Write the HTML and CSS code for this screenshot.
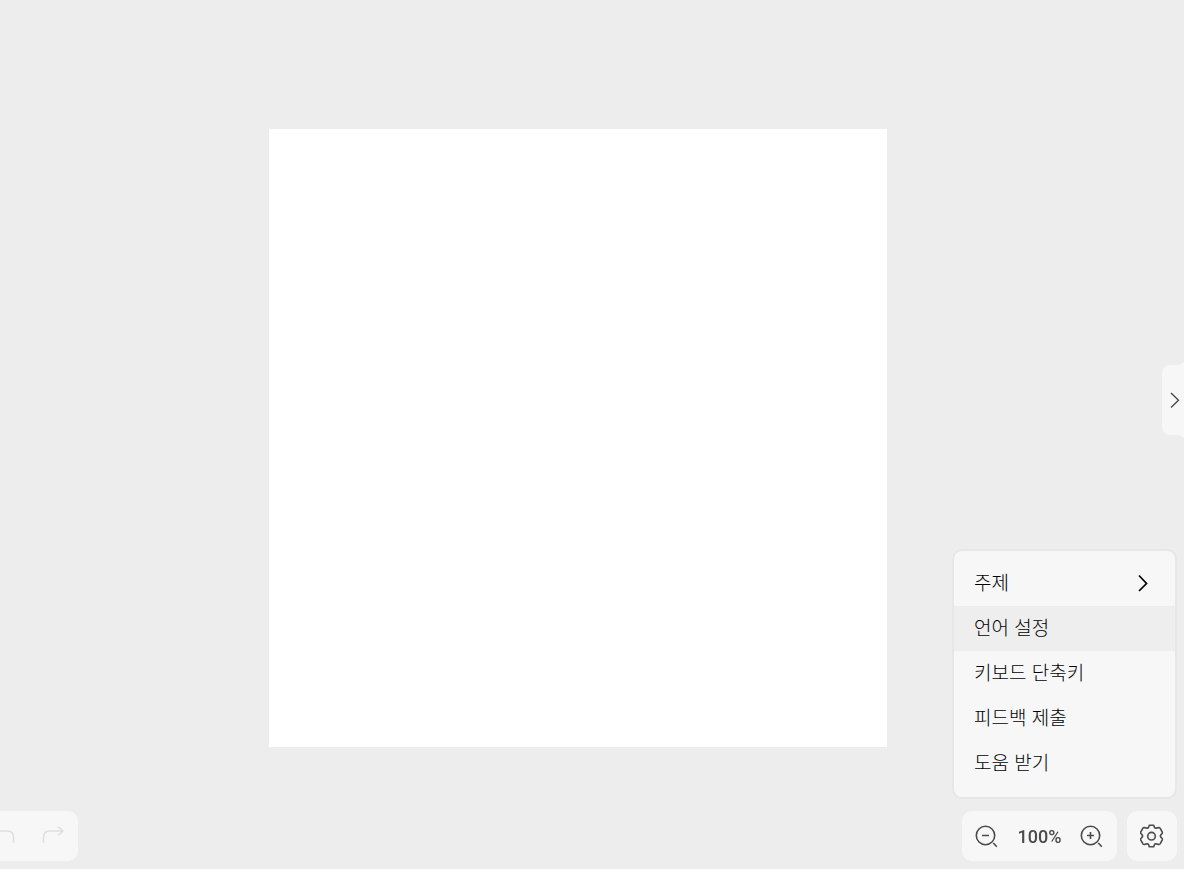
FILE: index.html
```html
<!DOCTYPE html>
<html lang="ko">
<head>
<meta charset="UTF-8" />
<meta name="viewport" content="width=device-width, initial-scale=1" />
<title>Canvas</title>
<link rel="stylesheet" href="styles.css">
</head>
<body>

<main class="workspace">
  <canvas class="artboard" id="artboard" width="618" height="618"></canvas>
</main>

<button class="side-tab" type="button" aria-label="패널 열기">
  <svg width="22" height="76" viewBox="0 0 22 76" fill="none">
    <path d="M22 0C20 2 17 3 13 3H9Q0 3 0 12V64Q0 73 9 73H13C17 73 20 74 22 76Z" fill="#f7f7f7" />
    <path d="M9 31L16.500 38.300L9 45.500" stroke="#4b4b4b" stroke-width="1.400" />
  </svg>
</button>

<div class="bottom">
  <div class="bar">
    <button class="tool" type="button" aria-label="실행 취소" disabled>
      <svg width="24" height="24" viewBox="0 0 24 24">
        <path d="M22.500 18.500V13.500Q22.500 7 16 7H2M7 2.500L2 7L7 11.500" />
      </svg>
    </button>
    <button class="tool" type="button" aria-label="다시 실행" disabled>
      <svg width="24" height="24" viewBox="0 0 24 24">
        <path d="M2.500 18.500V13.500Q2.500 7 8.500 7H22M17 2.500L22 7L17 11.500" />
      </svg>
    </button>
  </div>

  <div class="right">
    <nav class="menu" id="settingsMenu">
      <button class="menu-item" type="button">주제
        <svg width="12" height="18" viewBox="0 0 12 18"><path d="M2 1.500L9.500 9.500L2 17" /></svg>
      </button>
      <button class="menu-item active" type="button">언어 설정</button>
      <button class="menu-item" type="button">키보드 단축키</button>
      <button class="menu-item" type="button">피드백 제출</button>
      <button class="menu-item" type="button">도움 받기</button>
    </nav>

    <div class="bar">
      <button class="tool" type="button" id="zoomOut" aria-label="축소">
        <svg width="24" height="24" viewBox="0 0 24 24">
          <circle cx="10.500" cy="11.500" r="9.200" /><path d="M7 11.500H14M18.300 19L21.800 22.700" />
        </svg>
      </button>
      <button class="zoom-value" type="button" id="zoomValue">100%</button>
      <button class="tool" type="button" id="zoomIn" aria-label="확대">
        <svg width="24" height="24" viewBox="0 0 24 24">
          <circle cx="10.500" cy="11.500" r="9.200" /><path d="M7 11.500H14M10.500 8V15M18.300 19L21.800 22.700" />
        </svg>
      </button>
    </div>

    <div class="bar">
      <button class="tool" type="button" id="settings" aria-label="설정">
        <svg width="24" height="24" viewBox="0 0 24 24">
          <path d="M9.300 1.200H13.700L14.500 3.400Q15 4.500 16.300 4.100L18.700 3.500Q19.600 3.400 20.200 4.400L22.300 8.200Q22.600 9 21.900 9.700L20.800 10.900Q20 12 20.800 13.100L21.900 14.300Q22.600 15 22.300 15.800L20.200 19.600Q19.600 20.600 18.700 20.500L16.300 19.900Q15 19.500 14.500 20.600L13.700 22.800H9.300L8.500 20.600Q8 19.500 6.700 19.900L4.300 20.500Q3.400 20.600 2.800 19.600L.7 15.800Q.4 15 1.100 14.300L2.200 13.100Q3 12 2.200 10.900L1.100 9.700Q.4 9 .7 8.200L2.800 4.400Q3.400 3.400 4.300 3.500L6.700 4.100Q8 4.500 8.500 3.400Z" />
          <circle cx="11.500" cy="12.200" r="3.800" />
        </svg>
      </button>
    </div>
  </div>
</div>

<script>
  const menu = document.getElementById('settingsMenu');
  const artboard = document.getElementById('artboard');
  const zoomValue = document.getElementById('zoomValue');
  let zoom = 100;

  function setZoom(value) {
    zoom = Math.min(200, Math.max(10, value));
    artboard.style.scale = zoom / 100;
    zoomValue.textContent = zoom + '%';
  }

  document.getElementById('zoomOut').addEventListener('click', () => setZoom(zoom - 10));
  document.getElementById('zoomIn').addEventListener('click', () => setZoom(zoom + 10));
  zoomValue.addEventListener('click', () => setZoom(100));

  // Toggle settings menu
  document.getElementById('settings').addEventListener('click', () => {
    menu.hidden = !menu.hidden;
  });
</script>

</body>
</html>
```
FILE: styles.css
```css
* {
  box-sizing: border-box;
}
body {
  margin: 0;
  background: #ededed;
  color: #000;
  font-family: "Noto Sans CJK KR", sans-serif;
}
button {
  border: 0;
  padding: 0;
  background: none;
  color: inherit;
  font: inherit;
  cursor: pointer;
}
svg {
  display: block;
}
.workspace {
  display: flex;
  align-items: center;
  justify-content: center;
  min-height: 100vh;
  padding: 7px 28px 0 0;
}
.artboard {
  width: 100%;
  max-width: 618px;
  background: #fff;
}
.side-tab {
  position: fixed;
  top: 362px;
  right: 0;
}
.bottom {
  position: fixed;
  left: -22px;
  right: 7px;
  bottom: 8px;
  display: flex;
  justify-content: space-between;
}
.right {
  position: relative;
  display: flex;
  gap: 10px;
}
.bar {
  display: flex;
  height: 50px;
  background: #f7f7f7;
  border-radius: 10px;
}
.tool {
  display: flex;
  align-items: center;
  justify-content: center;
  width: 50px;
}
.tool svg {
  fill: none;
  stroke: #4b4b4b;
  stroke-width: 1.6;
  stroke-linejoin: round;
}
.tool:disabled svg {
  stroke: #dfdfdf;
}
.zoom-value {
  width: 55px;
  color: #4b4b4b;
  font-family: Roboto, sans-serif;
  font-size: 18px;
  font-weight: 500;
}
.menu {
  position: absolute;
  right: 0;
  bottom: 62px;
  width: 225px;
  padding: 10px 0 11px;
  background: #f7f7f7;
  border: 2px solid #e7e7e7;
  border-radius: 10px;
}
.menu[hidden] {
  display: none;
}
.menu-item {
  display: flex;
  align-items: center;
  justify-content: space-between;
  width: 100%;
  height: 45px;
  padding: 0 26px 4px 20px;
  font-size: 19px;
  font-weight: 300;
}
.menu-item.active,
.menu-item:hover {
  background: #eee;
}
.menu-item svg {
  margin-top: 2px;
  fill: none;
  stroke: #000;
  stroke-width: 1.7;
}
```
